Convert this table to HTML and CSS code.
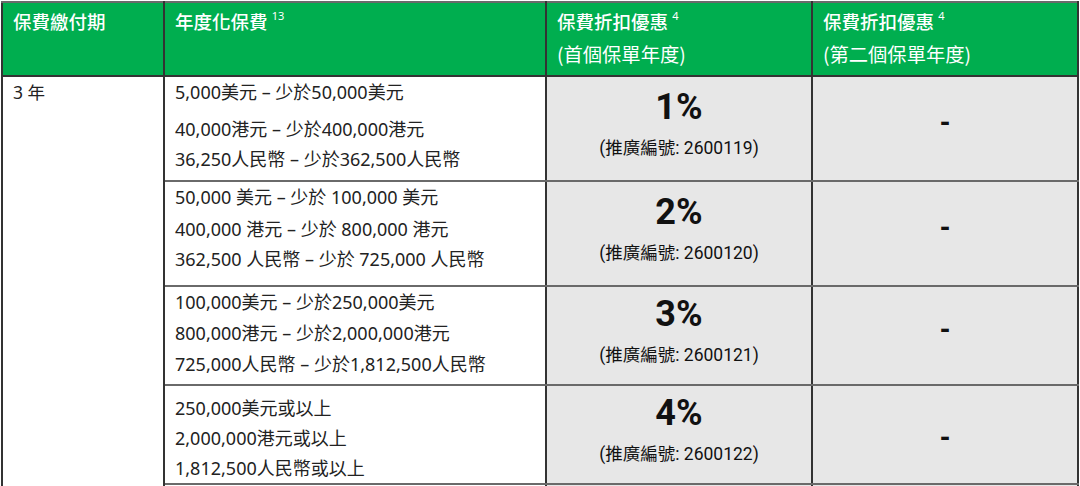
FILE: index.html
```html
<!DOCTYPE html>
<html lang="zh-Hant">
<head>
<meta charset="utf-8">
<link rel="stylesheet" href="styles.css">
</head>
<body>
<table class="rates">
  <colgroup>
    <col class="c1"><col class="c2"><col class="c3"><col class="c4">
  </colgroup>
  <thead>
    <tr class="head">
      <th><span class="hl">保費繳付期</span></th>
      <th><span class="hl">年度化保費 <sup>13</sup></span></th>
      <th><span class="hl">保費折扣優惠 <sup>4</sup></span><span class="sub">(首個保單年度)</span></th>
      <th><span class="hl">保費折扣優惠 <sup>4</sup></span><span class="sub">(第二個保單年度)</span></th>
    </tr>
  </thead>
  <tbody>
    <tr class="r1">
      <td class="term" rowspan="5"><div class="ln">3 年</div></td>
      <td class="range"><div class="ln first">5,000美元 – 少於50,000美元</div><div class="ln">40,000港元 – 少於400,000港元</div><div class="ln">36,250人民幣 – 少於362,500人民幣</div></td>
      <td class="disc"><div class="pct">1%</div><div class="code">(推廣編號: 2600119)</div></td>
      <td class="none">-</td>
    </tr>
    <tr class="r2">
      <td class="range"><div class="ln">50,000 美元 – 少於 100,000 美元</div><div class="ln">400,000 港元 – 少於 800,000 港元</div><div class="ln">362,500 人民幣 – 少於 725,000 人民幣</div></td>
      <td class="disc"><div class="pct">2%</div><div class="code">(推廣編號: 2600120)</div></td>
      <td class="none">-</td>
    </tr>
    <tr class="r3">
      <td class="range"><div class="ln">100,000美元 – 少於250,000美元</div><div class="ln">800,000港元 – 少於2,000,000港元</div><div class="ln">725,000人民幣 – 少於1,812,500人民幣</div></td>
      <td class="disc"><div class="pct">3%</div><div class="code">(推廣編號: 2600121)</div></td>
      <td class="none">-</td>
    </tr>
    <tr class="r4">
      <td class="range"><div class="ln">250,000美元或以上</div><div class="ln">2,000,000港元或以上</div><div class="ln">1,812,500人民幣或以上</div></td>
      <td class="disc"><div class="pct">4%</div><div class="code">(推廣編號: 2600122)</div></td>
      <td class="none">-</td>
    </tr>
    <tr class="r5">
      <td class="range"></td>
      <td class="disc"></td>
      <td class="none"></td>
    </tr>
  </tbody>
</table>
</body>
</html>
```
FILE: styles.css
```css
html, body {
  margin: 0;
  padding: 0;
  background: #ffffff;
  overflow: hidden;
}
body {
  padding: 1px 0 0 1px;
  font-family: "Noto Sans", "Noto Sans CJK TC", sans-serif;
  color: #222;
}
.rates {
  border-collapse: collapse;
  table-layout: fixed;
  width: 1078px;
  border: 2px solid #3a3a3a;
}
.c1 { width: 162px; }
.c2 { width: 382px; }
.c3 { width: 266px; }
.c4 { width: 266px; }

:where(.rates) th, :where(.rates) td {
  border-left: 2px solid #333;
  border-right: 2px solid #333;
  border-top: 2px solid #6a6a6a;
  border-bottom: 2px solid #6a6a6a;
  padding: 0 10px;
}
.head {
  height: 74px;
}
.head th {
  background: #00ae4f;
  color: #fff;
  font-weight: 400;
  font-size: 18.5px;
  text-align: left;
  vertical-align: top;
  padding-top: 2px;
  padding-bottom: 0;
  border-bottom-color: #333;
  font-family: "Noto Sans CJK TC", "Noto Sans", sans-serif;
}
.hl, .sub {
  display: block;
  height: 33px;
  line-height: 33px;
  white-space: nowrap;
}
.hl {
  font-weight: 500;
}
.sub {
  font-weight: 400;
  font-size: 19.3px;
}
.head th sup {
  font-size: 11px;
  line-height: 0;
  vertical-align: 0;
  position: relative;
  top: -9px;
  font-weight: 400;
  font-family: "Noto Sans", sans-serif;
}
.term {
  vertical-align: top;
  font-size: 17.5px;
  background: #fff;
  padding-top: 0;
}
.range {
  font-size: 18px;
  vertical-align: top;
  background: #fff;
}
.ln {
  height: 30px;
  line-height: 30px;
  white-space: nowrap;
}
.r1 .range { padding-top: 0; }
.r1 .first { margin-bottom: 7px; }
.r2 .range { padding-top: 0; }
.r2 .ln:first-child { margin-bottom: 2px; }
.r3 .range { padding-top: 0; }
.r3 .ln { height: 31px; }
.r4 .range { padding-top: 7px; }

.disc, .none {
  background: #e7e7e7;
  text-align: center;
  vertical-align: middle;
  color: #111;
}
.pct {
  font-family: Roboto, "Liberation Sans", sans-serif;
  font-weight: 700;
  font-size: 36px;
  height: 40px;
  line-height: 40px;
}
.code {
  font-family: Roboto, "Noto Sans CJK TC", sans-serif;
  font-size: 17.5px;
  height: 26px;
  line-height: 26px;
  margin-top: 8px;
  margin-bottom: 9px;
  white-space: nowrap;
}
.none {
  font-family: Roboto, "Liberation Sans", sans-serif;
  font-weight: 900;
  font-size: 26px;
  line-height: 30px;
  padding-bottom: 13px;
}
.r4 .none {
  padding-bottom: 0;
  padding-top: 4px;
}
.r1 { height: 105px; }
.r2 { height: 105px; }
.r3 { height: 99px; }
.r4 { height: 98px; }
.r5 { height: 30px; }
```
